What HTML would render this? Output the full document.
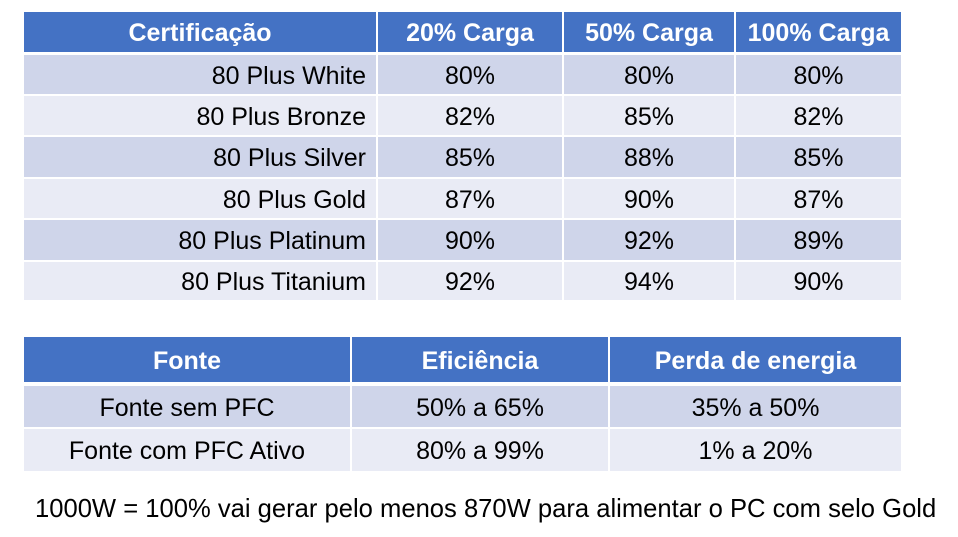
<!DOCTYPE html>
<html><head><meta charset="utf-8"><style>
body{margin:0;width:958px;height:537px;background:#fff;position:relative;overflow:hidden;font-family:"Liberation Sans",Arial,sans-serif;}
.c{position:absolute;display:flex;align-items:center;font-size:25px;color:#000;box-sizing:border-box;white-space:nowrap;padding-top:3px;}
.h{background:#4472c4;color:#fff;font-weight:bold;justify-content:center;}
.o{background:#cfd5ea;}
.e{background:#e9ebf5;}
.ctr{justify-content:center;}
.r{justify-content:flex-end;padding-right:10px;}
</style></head><body>
<div id="t1"></div>
<div class="c" style="left:35px;top:490px;height:36px;font-size:25.6px;">1000W = 100% vai gerar pelo menos 870W para alimentar o PC com selo Gold</div>
<script>
var cols=[[24,376],[378,562],[564,734],[736,901]];
var rows=[[12,52],[55,94],[96,135],[137,177],[179,218],[220,260],[262,300]];
var d=[["Certificação","20% Carga","50% Carga","100% Carga"],
["80 Plus White","80%","80%","80%"],["80 Plus Bronze","82%","85%","82%"],
["80 Plus Silver","85%","88%","85%"],["80 Plus Gold","87%","90%","87%"],
["80 Plus Platinum","90%","92%","89%"],["80 Plus Titanium","92%","94%","90%"]];
var h="";
function build(cols,rows,d,firstAlign){
 for(var i=0;i<rows.length;i++)for(var j=0;j<cols.length;j++){
  var cls=i==0?"h":(i%2?"o":"e")+" "+(j==0?firstAlign:"ctr");
  h+='<div class="c '+cls+'" style="left:'+cols[j][0]+'px;top:'+rows[i][0]+'px;width:'+(cols[j][1]-cols[j][0])+'px;height:'+(rows[i][1]-rows[i][0])+'px">'+d[i][j]+'</div>';
 }}
build(cols,rows,d,"r");
build([[24,350],[352,608],[610,901]],[[337,382],[386,427],[429,471]],
[["Fonte","Eficiência","Perda de energia"],["Fonte sem PFC","50% a 65%","35% a 50%"],["Fonte com PFC Ativo","80% a 99%","1% a 20%"]],"ctr");
document.getElementById("t1").innerHTML=h;
</script>
</body></html>
